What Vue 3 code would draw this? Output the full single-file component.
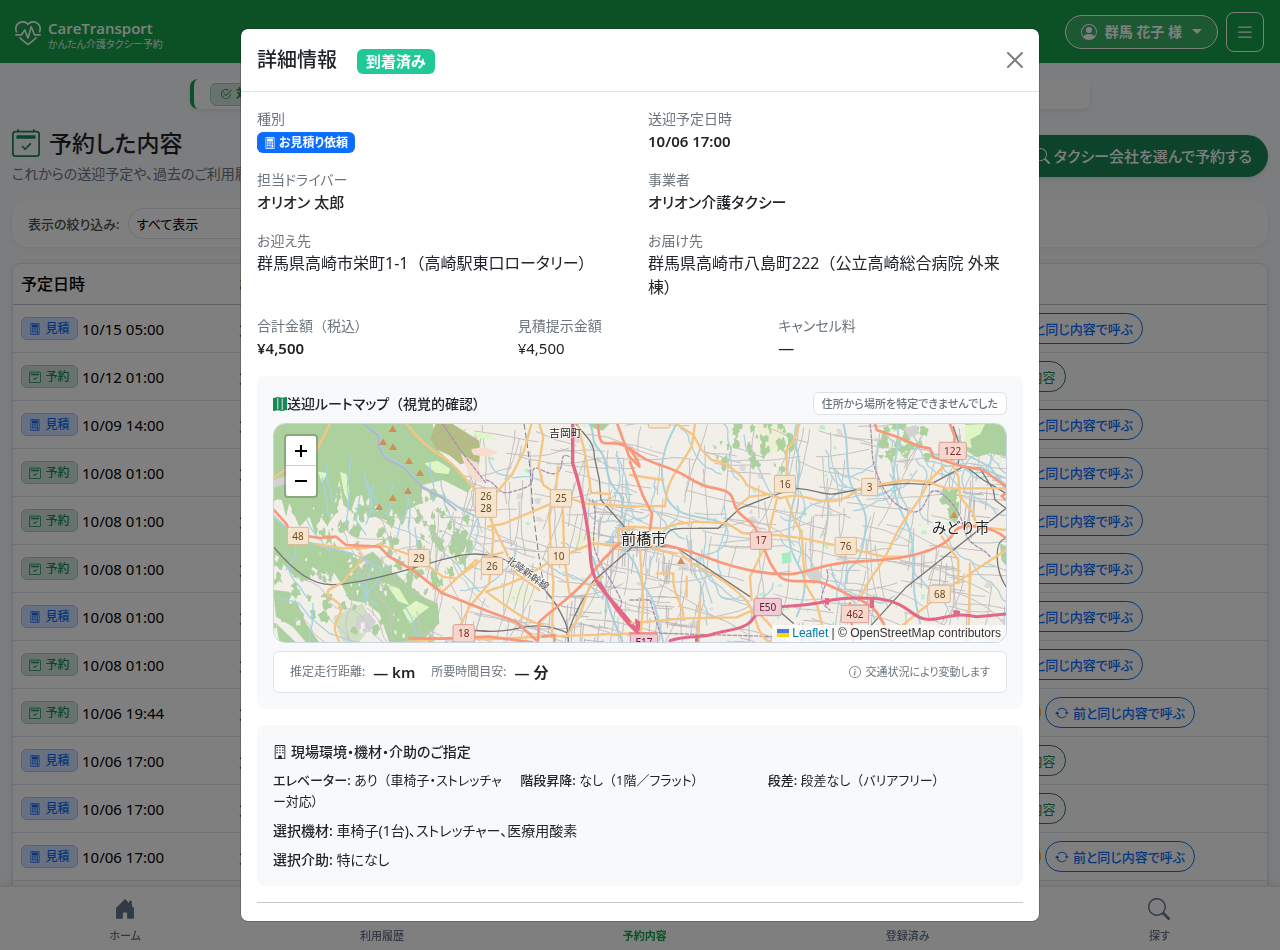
<script setup>
import { h } from 'vue'

const icons = {
  heartPulse: [
    'm8 2.748-.717-.737C5.6.281 2.514.878 1.4 3.053.918 3.995.78 5.323 1.508 7H.43c-2.128-5.697 4.165-8.83 7.394-5.857q.09.083.176.171a3 3 0 0 1 .176-.17c3.23-2.974 9.522.159 7.394 5.856h-1.078c.728-1.677.59-3.005.108-3.947C13.486.878 10.4.28 8.717 2.01zM2.212 10h1.315C4.593 11.183 6.05 12.458 8 13.795c1.949-1.337 3.407-2.612 4.473-3.795h1.315c-1.265 1.566-3.14 3.25-5.788 5-2.648-1.75-4.523-3.434-5.788-5',
    'M10.464 3.314a.5.5 0 0 0-.945.049L7.921 8.956 6.464 5.314a.5.5 0 0 0-.88-.091L3.732 8H.5a.5.5 0 0 0 0 1H4a.5.5 0 0 0 .416-.223l1.473-2.209 1.647 4.118a.5.5 0 0 0 .945-.049l1.598-5.593 1.457 3.642A.5.5 0 0 0 12 9h3.5a.5.5 0 0 0 0-1h-3.162z'
  ],
  calendar: [
    'M10.854 8.146a.5.5 0 0 1 0 .708l-3 3a.5.5 0 0 1-.708 0l-1.5-1.5a.5.5 0 0 1 .708-.708L7.5 10.793l2.646-2.647a.5.5 0 0 1 .708 0',
    'M3.5 0a.5.5 0 0 1 .5.5V1h8V.5a.5.5 0 0 1 1 0V1h1a2 2 0 0 1 2 2v11a2 2 0 0 1-2 2H2a2 2 0 0 1-2-2V3a2 2 0 0 1 2-2h1V.5a.5.5 0 0 1 .5-.5M2 2a1 1 0 0 0-1 1v11a1 1 0 0 0 1 1h12a1 1 0 0 0 1-1V3a1 1 0 0 0-1-1z',
    'M2.5 4a.5.5 0 0 1 .5-.5h10a.5.5 0 0 1 .5.5v1a.5.5 0 0 1-.5.5H3a.5.5 0 0 1-.5-.5z'
  ],
  search: [
    'M11.742 10.344a6.5 6.5 0 1 0-1.397 1.398h-.001q.044.06.098.115l3.85 3.85a1 1 0 0 0 1.415-1.414l-3.85-3.85a1 1 0 0 0-.115-.1zM12 6.5a5.5 5.5 0 1 1-11 0 5.5 5.5 0 0 1 11 0'
  ],
  person: [
    'M11 6a3 3 0 1 1-6 0 3 3 0 0 1 6 0',
    'M0 8a8 8 0 1 1 16 0A8 8 0 0 1 0 8m8-7a7 7 0 0 0-5.468 11.37C3.242 11.226 4.805 10 8 10s4.757 1.225 5.468 2.37A7 7 0 0 0 8 1'
  ],
  list: [
    'M2.5 12a.5.5 0 0 1 .5-.5h10a.5.5 0 0 1 0 1H3a.5.5 0 0 1-.5-.5m0-4a.5.5 0 0 1 .5-.5h10a.5.5 0 0 1 0 1H3a.5.5 0 0 1-.5-.5m0-4a.5.5 0 0 1 .5-.5h10a.5.5 0 0 1 0 1H3a.5.5 0 0 1-.5-.5'
  ],
  house: [
    'M6.5 14.5v-3.505c0-.245.25-.495.5-.495h2c.25 0 .5.25.5.5v3.5a.5.5 0 0 0 .5.5h4a.5.5 0 0 0 .5-.5v-7a.5.5 0 0 0-.146-.354L13 5.793V2.5a.5.5 0 0 0-.5-.5h-1a.5.5 0 0 0-.5.5v1.293L8.354 1.146a.5.5 0 0 0-.708 0l-6 6A.5.5 0 0 0 1.5 7.5v7a.5.5 0 0 0 .5.5h4a.5.5 0 0 0 .5-.5'
  ],
  check: [
    'M2.5 8a5.5 5.5 0 0 1 8.25-4.764.5.5 0 0 0 .5-.866A6.5 6.5 0 1 0 14.5 8a.5.5 0 0 0-1 0 5.5 5.5 0 1 1-11 0',
    'M15.354 3.354a.5.5 0 0 0-.708-.708L8 9.293 5.354 6.646a.5.5 0 1 0-.708.708l3 3a.5.5 0 0 0 .708 0z'
  ],
  info: [
    'M8 15A7 7 0 1 1 8 1a7 7 0 0 1 0 14m0 1A8 8 0 1 0 8 0a8 8 0 0 0 0 16',
    'm8.93 6.588-2.29.287-.082.38.45.083c.294.07.352.176.288.469l-.738 3.468c-.194.897.105 1.319.808 1.319.545 0 1.178-.252 1.465-.598l.088-.416c-.2.176-.492.246-.686.246-.275 0-.375-.193-.304-.533zM9 4.5a1 1 0 1 1-2 0 1 1 0 0 1 2 0'
  ],
  repeat: [
    'M11.534 7h3.932a.25.25 0 0 1 .192.41l-1.966 2.36a.25.25 0 0 1-.384 0l-1.966-2.36a.25.25 0 0 1 .192-.41m-11 2h3.932a.25.25 0 0 0 .192-.41L2.692 6.23a.25.25 0 0 0-.384 0L.342 8.59A.25.25 0 0 0 .534 9',
    'M8 3c-1.552 0-2.94.707-3.857 1.818a.5.5 0 1 1-.771-.636A6.002 6.002 0 0 1 13.917 7H12.9A5 5 0 0 0 8 3M3.1 9a5.002 5.002 0 0 0 8.757 2.182.5.5 0 1 1 .771.636A6.002 6.002 0 0 1 2.083 9z'
  ],
  calculator: [
    'M3 0h10a1 1 0 0 1 1 1v14a1 1 0 0 1-1 1H3a1 1 0 0 1-1-1V1a1 1 0 0 1 1-1m0 1v14h10V1z',
    'M4 2h8v4H4zM4 7h2v2H4zm3 0h2v2H7zm3 0h2v2h-2zM4 10h2v2H4zm3 0h2v2H7zm-3 3h2v1H4zm3 0h2v1H7zm3-3h2v4h-2z'
  ],
  map: [
    'M15.8.1a.5.5 0 0 1 .2.4v14a.5.5 0 0 1-.4.49l-5 1h-.2L5.500 15.010l-4.900.98A.5.5 0 0 1 0 15.500v-14a.5.5 0 0 1 .4-.49l5-1h.2l4.900.98 4.900-.98a.5.5 0 0 1 .4.09M5 14.090V1.110l.5-.1.5.1v12.980l-.5-.1zm5 .8V1.910l.5.1.5-.1v12.980l-.5.1z'
  ],
  building: [
    'M2 1a1 1 0 0 1 1-1h10a1 1 0 0 1 1 1v14a1 1 0 0 1-1 1H3a1 1 0 0 1-1-1zm11 0H3v14h3v-2.500a.5.5 0 0 1 .5-.5h3a.5.5 0 0 1 .5.5V15h3z',
    'M4 2h1.500v1.500H4zm3.200 0h1.500v1.500H7.200zm3.300 0H12v1.500h-1.500zM4 5h1.500v1.500H4zm3.200 0h1.500v1.500H7.200zm3.300 0H12v1.500h-1.500zM4 8h1.500v1.500H4zm3.200 0h1.500v1.500H7.200zm3.300 0H12v1.500h-1.500z'
  ],
  close: [
    'M.293.293a1 1 0 0 1 1.414 0L8 6.586 14.293.293a1 1 0 1 1 1.414 1.414L9.414 8l6.293 6.293a1 1 0 0 1-1.414 1.414L8 9.414l-6.293 6.293a1 1 0 0 1-1.414-1.414L6.586 8 .293 1.707a1 1 0 0 1 0-1.414'
  ]
}

const Icon = (props) =>
  h(
    'svg',
    { width: props.size, height: props.size, viewBox: '0 0 16 16', fill: 'currentColor', 'aria-hidden': 'true' },
    icons[props.name].map((d) => h('path', { d, 'fill-rule': 'evenodd' }))
  )
Icon.props = ['name', 'size']

const rows = [
  ['quote', '10/15 05:00', 'repeat'],
  ['book', '10/12 01:00', 'detail'],
  ['quote', '10/09 14:00', 'repeat'],
  ['book', '10/08 01:00', 'repeat'],
  ['book', '10/08 01:00', 'repeat'],
  ['book', '10/08 01:00', 'repeat'],
  ['quote', '10/08 01:00', 'repeat'],
  ['book', '10/08 01:00', 'repeat'],
  ['book', '10/06 19:44', 'both'],
  ['quote', '10/06 17:00', 'detail'],
  ['quote', '10/06 17:00', 'detail'],
  ['quote', '10/06 17:00', 'both'],
  ['book', '10/05 09:00', 'repeat']
]

const tabs = [
  { label: 'ホーム', icon: 'house' },
  { label: '利用履歴', icon: 'list' },
  { label: '予約内容', icon: 'calendar', active: true },
  { label: '登録済み', icon: 'check' },
  { label: '探す', icon: 'search' }
]

// Map terrain: a seeded generator keeps the small streets and streams stable.
let seed = 41
const rnd = () => {
  seed = (seed * 16807) % 2147483647
  return seed / 2147483647
}
const W = 2196
const H = 654
function wander(x, y, angle, steps, len, wobble) {
  let d = `M${Math.round(x)} ${Math.round(y)}`
  for (let i = 0; i < steps; i++) {
    angle += (rnd() - 0.5) * wobble
    x += Math.cos(angle) * len
    y += Math.sin(angle) * len
    d += `L${Math.round(x)} ${Math.round(y)}`
  }
  return d
}
const eastX = (from) => from + rnd() * (W - from)
const streets = Array.from({ length: 330 }, () =>
  wander(eastX(480), rnd() * H, (rnd() > 0.5 ? 0.15 : 1.7) + (rnd() - 0.5) * 0.3, 3 + Math.floor(rnd() * 5), 32, 0.35)
).join('')
const townStreets = [[1150, 560], [1030, 350], [1000, 250], [1130, 380], [870, 560], [1560, 620], [930, 640], [1960, 430], [2120, 240]]
  .map(([cx, cy]) =>
    Array.from({ length: 14 }, () => wander(cx + (rnd() - 0.5) * 120, cy + (rnd() - 0.5) * 90, rnd() > 0.5 ? 0.1 : 1.65, 2, 28, 0.1)).join('')
  )
  .join('')
const hillStreets = Array.from({ length: 32 }, () =>
  wander(rnd() * 560, 220 + rnd() * 420, 0.3 + rnd() * 1.3, 7, 26, 0.9)
).join('')
const streams = Array.from({ length: 48 }, () =>
  wander(eastX(500), rnd() * 520 - 40, 1.2 + rnd() * 0.5, 14, 16, 1.1)
).join('')
const hillStreams = Array.from({ length: 18 }, () =>
  wander(rnd() * 520, 100 + rnd() * 500, 1 + rnd() * 0.8, 6, 20, 0.6)
).join('')
function blob(x, y, r, stretch) {
  let d = ''
  const n = 11
  for (let i = 0; i < n; i++) {
    const a = (i / n) * Math.PI * 2
    const k = r * (0.35 + rnd() * 0.85)
    d += `${i ? 'L' : 'M'}${Math.round(x + Math.cos(a) * k)} ${Math.round(y + Math.sin(a) * k * stretch)}`
  }
  return d + 'Z'
}
const groves = [
  ...Array.from({ length: 150 }, () => blob(rnd() * 590, 180 + rnd() * 300, 4 + rnd() * 13, 1.6)),
  ...Array.from({ length: 55 }, () => blob(rnd() * 480, 400 + rnd() * 250, 6 + rnd() * 15, 1.1)),
  ...Array.from({ length: 34 }, () => blob(1320 + rnd() * 260, rnd() * 140, 4 + rnd() * 12, 1.7)),
  ...Array.from({ length: 30 }, () => blob(1820 + rnd() * 140, rnd() * 110, 5 + rnd() * 13, 1.2)),
  ...Array.from({ length: 8 }, () => blob(2010 + rnd() * 50, 200 + rnd() * 90, 8 + rnd() * 12, 1.5))
].join('')
const clearings = Array.from({ length: 80 }, () => blob(rnd() * 560, 230 + rnd() * 410, 2 + rnd() * 7, 1.6)).join('')
const parks = Array.from({ length: 85 }, () => blob(eastX(650), rnd() * H, 3 + rnd() * 7, 1)).join('')
const works = Array.from({ length: 34 }, () => blob(eastX(700), rnd() * H, 6 + rnd() * 13, 0.8)).join('')

const shields = [
  { x: 636, y: 236, t: ['26', '28'] },
  { x: 861, y: 223, t: ['25'] },
  { x: 72, y: 336, t: ['48'] },
  { x: 435, y: 402, t: ['29'] },
  { x: 654, y: 426, t: ['26'] },
  { x: 854, y: 396, t: ['10'] },
  { x: 1533, y: 180, t: ['16'] },
  { x: 1787, y: 189, t: ['3'], w: 48 },
  { x: 1715, y: 366, t: ['76'] },
  { x: 1997, y: 510, t: ['68'] },
  { x: 1155, y: -14, t: [] },
  { x: 569, y: 628, t: ['18'], k: 'trunk' },
  { x: 2036, y: 81, t: ['122'], k: 'trunk', w: 82 },
  { x: 1461, y: 350, t: ['17'], k: 'trunk' },
  { x: 1743, y: 570, t: ['462'], k: 'trunk', w: 82 },
  { x: 1481, y: 549, t: ['E50'], k: 'motor', w: 82 },
  { x: 1110, y: 656, t: ['E17'], k: 'motor', w: 82 }
]
const peaks = [[356, 14], [327, 53], [357, 68], [405, 110], [438, 146], [402, 200], [356, 221], [315, 248], [1221, 410], [2040, 272]]
</script>

<template>
  <div class="page">
    <header class="topbar">
      <a class="brand" href="#">
        <Icon name="heartPulse" :size="26" />
        <span class="brand-text">
          <strong>CareTransport</strong>
          <small>かんたん介護タクシー予約</small>
        </span>
      </a>
      <div class="top-actions">
        <button class="user" type="button">
          <Icon name="person" :size="16" />
          <span>群馬 花子 様</span>
          <i class="caret"></i>
        </button>
        <button class="menu" type="button" aria-label="メニュー"><Icon name="list" :size="20" /></button>
      </div>
    </header>

    <main class="content">
      <div class="notice"><span class="notice-tag"><Icon name="check" :size="12" />対応エリア</span></div>
      <div class="heading">
        <div>
          <h1><Icon name="calendar" :size="28" />予約した内容</h1>
          <p>これからの送迎予定や、過去のご利用履歴を確認できます</p>
        </div>
        <button class="cta" type="button"><Icon name="search" :size="16" />タクシー会社を選んで予約する</button>
      </div>
      <div class="filter">
        <label for="filter">表示の絞り込み:</label>
        <select id="filter"><option>すべて表示</option></select>
      </div>
      <table class="list">
        <thead>
          <tr><th class="c-date">予定日時</th><th>お迎え先</th><th class="c-act">ご操作</th></tr>
        </thead>
        <tbody>
          <tr v-for="(r, i) in rows" :key="i">
            <td>
              <div class="slot">
                <span class="tag" :class="r[0]">
                  <Icon :name="r[0] === 'quote' ? 'calculator' : 'calendar'" :size="12" />{{ r[0] === 'quote' ? '見積' : '予約' }}
                </span>
                <span class="date">{{ r[1] }}</span>
              </div>
            </td>
            <td>太田市</td>
            <td>
              <div class="acts">
                <button v-if="r[2] === 'both'" class="pill warn" type="button">評価</button>
                <button v-if="r[2] === 'detail'" class="pill ok" type="button">予約内容</button>
                <button v-else class="pill again" type="button"><Icon name="repeat" :size="14" />前と同じ内容で呼ぶ</button>
              </div>
            </td>
          </tr>
        </tbody>
      </table>
    </main>

    <nav class="tabs">
      <a v-for="t in tabs" :key="t.label" href="#" :class="{ active: t.active }">
        <Icon :name="t.icon" :size="22" /><span>{{ t.label }}</span>
      </a>
    </nav>

    <div class="backdrop">
      <section class="modal" role="dialog" aria-modal="true" aria-labelledby="modal-title">
        <header class="modal-head">
          <h2 id="modal-title">詳細情報</h2>
          <span class="status">到着済み</span>
          <button class="close" type="button" aria-label="閉じる"><Icon name="close" :size="16" /></button>
        </header>
        <div class="modal-body">
          <dl class="grid two">
            <div><dt>種別</dt><dd><span class="kind"><Icon name="calculator" :size="12" />お見積り依頼</span></dd></div>
            <div><dt>送迎予定日時</dt><dd class="when">10/06 17:00</dd></div>
            <div><dt>担当ドライバー</dt><dd class="strong">オリオン 太郎</dd></div>
            <div><dt>事業者</dt><dd class="strong">オリオン介護タクシー</dd></div>
            <div><dt>お迎え先</dt><dd>群馬県高崎市栄町1-1<i class="open">（</i>高崎駅東口ロータリー）</dd></div>
            <div><dt>お届け先</dt><dd>群馬県高崎市八島町222<i class="open">（</i>公立高崎総合病院 外来棟）</dd></div>
          </dl>
          <dl class="grid three">
            <div><dt>合計金額<i class="open">（</i>税込）</dt><dd class="when">¥4,500</dd></div>
            <div><dt>見積提示金額</dt><dd class="amount">¥4,500</dd></div>
            <div><dt>キャンセル料</dt><dd>—</dd></div>
          </dl>

          <section class="card">
            <div class="map-head">
              <h3><Icon name="map" :size="14" /><span>送迎ルートマップ<i class="open">（</i>視覚的確認）</span></h3>
              <span class="map-note">住所から場所を特定できませんでした</span>
            </div>
            <div class="map">
              <svg class="map-svg" viewBox="0 0 2196 654" preserveAspectRatio="xMidYMid slice" role="img" aria-label="地図">
                <rect width="2196" height="654" fill="#f2efe9" />
                <g class="line">
                  <path :d="works" fill="#dcd9d6" />
                  <path d="M1450 0l90 0-20 80-60 20zM900 330l60-10 20 50-70 10zM690 500l70-20 10 50-80 10z" fill="#eef0d5" />
                  <path :d="parks" fill="#b9f0d0" />
                  <path :d="streets" stroke="#c3c1c2" stroke-width="3" />
                  <path :d="townStreets" stroke="#bbb9bc" stroke-width="3" />
                  <path :d="streams" stroke="#aad3df" stroke-width="4" />
                  <path :d="groves" fill="#add19e" />
                </g>
                <!-- western hills and Maebashi -->
                <g class="line" transform="translate(-54 -162)">
                  <g fill="#add19e">
                    <path d="M52 162H530L545 240 600 290 650 345 636 368 560 330 500 345 494 400 455 420 440 470 420 430 395 452 360 440 335 445 318 375 300 380 285 425 262 405 250 330 235 405 215 470 195 440 180 500 160 440 130 470 100 400 90 440 75 380 52 395Z" />
                    <path d="M52 440L90 470 120 505 200 525 260 540 295 552 270 580 235 610 200 612 170 590 150 630 110 615 80 580 52 590Z" />
                    <path d="M225 595L300 570 350 545 400 590 450 640 500 680 545 700 550 760 510 800 490 817 400 817 370 730 330 700 280 690 255 640Z" />
                    <path d="M52 660L100 665 125 700 150 760 190 817H150L110 770 60 740ZM60 760l60 57H70Z" />
                    <path d="M230 740l90-40 30 60-40 57H260Z" opacity=".5" />
                    <path d="M1000 162h60l-20 20-30-8z" />
                  </g>
                  <path d="M538 162H590L670 212V275L612 282 580 256 540 238 524 205Z" fill="#b3bd86" />
                  <path d="M524 205l60-43M540 238l90-60M575 252l90-50M612 282l58-35" stroke="#d9a08e" stroke-width="2" />
                  <path d="M645 238l40-8 42 16-30 16-45-8zM614 250l52 32 16 60-30-12-24-40z" fill="#f6ddd0" />
                  <path d="M505 280l40-8 38 24-6 16-38-4zM186 305l28 4-16 30zM252 305l20 8 8 50-2 35-14-30zM390 640l40 16 30 50-34-12zM440 720l40-28 40 20-28 20-30 30zM645 184l50 6 30 20-50-4z" fill="#dff6c4" />
                  <path d="M300 740l40-10 20 25-20 32-40-8zM52 330l40-14v25l-40 12z" fill="#d3d2d3" />
                  <path :d="clearings" fill="#f2efe9" transform="translate(54 162)" />
                  <path :d="hillStreets" stroke="#c6c4c6" stroke-width="3" transform="translate(54 162)" />
                  <path :d="hillStreams" stroke="#a5d2e4" stroke-width="4" transform="translate(54 162)" />
                  <path d="M52 435L130 510 200 530 290 550 360 590 400 600M60 680L130 700 160 740 220 790 300 817M284 265C286 320 268 330 276 365S272 430 270 465M410 345L402 420M312 375L300 450 330 495" stroke="#a5d2e4" stroke-width="4" />
                  <path d="M325 162L375 200 372 222 388 260 440 285 500 350 560 380 620 420 660 440M1010 560C1030 620 1050 680 1062 720S1090 790 1100 817M1000 162C1020 190 1000 210 1030 240S1045 330 1080 360 1090 420 1100 440" stroke="#a5cfdc" stroke-width="6" />
                  <path d="M325 164L368 198 368 228 386 264 440 290 500 354 560 385 600 420" stroke="#b5b4c0" stroke-width="5" />
                  <path d="M52 530C120 610 170 645 230 644S420 610 520 580 660 545 720 560 870 650 905 712 935 780 937 817M937 790C870 760 830 765 770 778S660 780 640 780M937 790C950 730 985 690 1010 635L1130 530" stroke="#777" stroke-width="4" />
                  <path d="M804 162C812 210 820 260 825 340S840 510 862 640" stroke="#777" stroke-width="3" stroke-dasharray="16 12" />
                  <path d="M960 162C990 200 1015 215 1015 260L1030 330 1035 390 1105 470" stroke="#777" stroke-width="4" />
                  <path d="M690 330C730 340 720 380 770 365S830 350 830 310 870 320 900 310 905 240 940 260M1010 390C1030 450 1000 500 1020 550S1060 620 1080 660 1100 690 1090 720M560 162L620 250 660 300 690 340" stroke="#a892b4" stroke-width="4" stroke-dasharray="10 6" />
                  <g class="road" stroke="#f7c583" stroke-width="7">
                    <path d="M452 162C480 200 510 230 560 260S640 350 670 370M222 162L185 235M52 325L100 290M826 162L805 240 770 310 720 370M850 162L862 200 848 290 862 345 900 370 985 400 1140 410M906 290L900 360 880 440 885 560 892 640 888 800M920 410L925 560 940 670M700 440L750 545 780 610 850 660M695 470L740 462 900 395M706 440L712 500 700 640 640 710 590 817M520 590L560 620 600 626 690 560 740 548M690 665C740 700 800 750 860 765M690 665C740 650 800 630 880 575L1010 520 1090 525M555 670L660 570M440 817L560 805 700 808 860 800 1140 790M937 790L970 740 1000 650 1040 620M965 162L985 240 1000 330 1005 368 1060 372 1065 410M375 525L420 540 520 575M375 520C330 545 300 530 260 535L180 522M310 548C330 580 280 600 270 625S210 650 215 670 250 690 255 712 225 760 240 790L250 817M1140 470L1085 480 1090 540" />
                  </g>
                  <g class="road" stroke="#f9987a" stroke-width="8">
                    <path d="M52 418L90 460 105 490 190 504 240 500 270 525 370 530 400 560 470 600 560 670 700 725 780 755 840 810M1026 162C1030 240 1045 215 1080 220S1130 240 1150 285M1084 162L1120 260 1150 290M1090 520L1040 570 1000 620C940 690 910 700 850 755L845 817M460 805L560 806 700 800 830 817M860 800L895 795 895 817" />
                  </g>
                  <path d="M950 162V280C980 370 990 440 998 500S1000 590 1020 630 1090 710 1140 780" stroke="#e36886" stroke-width="10" />
                </g>
                <!-- eastern plain up to Midori -->
                <g class="line" transform="translate(1068 -162)">
                  <path d="M1005 162H1115L1128 190V260L1080 250 1040 262 1005 240 1012 200ZM1110 520l20 10v60l-16-20z" fill="#add19e" />
                  <path d="M1005 165l60-3-14 30-30 16 4 26-20-4z" fill="#dff6c4" />
                  <path d="M820 175l40-10 8 26-30 12zM520 600l40-10 20 30-30 24z" fill="#d3d2d3" />
                  <path d="M455 550l26-4 4 30-28 6z" fill="#a6edc4" />
                  <path d="M-20 540C30 580 20 620 50 660S80 740 100 817M500 162C480 230 520 250 505 330S470 440 480 520 560 600 500 740M1000 250L1080 290 1128 360M1050 290L1110 320M640 162C660 220 640 300 670 360S720 420 700 520 650 560 650 640M140 162C100 230 80 300 110 380S250 430 290 470M800 162C820 230 770 300 800 390S850 460 850 580 860 700 870 760" stroke="#a9d3de" stroke-width="6" />
                  <path d="M720 162C730 230 720 260 740 310S780 400 830 420 880 400 900 370 990 410 1000 470 1060 530 1080 560M590 600C610 640 540 680 600 720M0 690L60 690 90 790 450 800" stroke="#a892b4" stroke-width="4" stroke-dasharray="10 6" />
                  <path d="M0 530C60 540 120 515 150 540L360 680M105 505C110 480 130 475 160 475H265L330 415C380 395 440 370 500 355 560 360 580 375 610 372S730 345 830 340L900 344 1000 290 1050 295 1090 360 1095 390 1128 415M1010 292L1060 330 1128 370M720 770L830 650 1128 415M455 730L490 760M970 170L990 230 985 280M1128 505C1090 510 1095 600 1128 650" stroke="#777" stroke-width="4" />
                  <g class="road" stroke="#f7c583" stroke-width="7">
                    <path d="M140 162L190 195 215 240 245 270C300 280 340 320 350 345L405 370 450 385C490 370 520 380 560 390S640 395 690 355M195 162L185 230C150 290 120 320 110 370L105 410M508 162L490 215 470 240V320M405 375L360 380 320 410M440 390L420 470 415 500M470 385L490 440 515 490 525 640 560 700 580 780M0 410L100 408M0 315L100 330M-10 470L100 475 140 462 200 455 290 460 340 490 410 495 440 495 520 505 610 525M680 540L760 560 830 560M740 345L830 330 890 335 950 355 1128 355M890 345C870 400 830 430 800 490S770 560 740 600 700 660 690 690M940 290L890 340M970 290L985 320 990 380 1030 430 1040 470 1128 480M935 500L985 570V640M1128 540L960 650 800 780M1020 580L1015 817M150 545C180 590 240 600 290 640S360 690 380 760 440 817 450 817M80 610H130V640C140 700 160 700 160 740M170 620V680M30 540L40 700 30 817M0 760L160 745 320 742 370 720M210 690L205 817M400 540L360 620 365 690M395 740C420 760 440 790 450 817M380 680L400 720M10 500L100 545 140 550" />
                  </g>
                  <g class="road" stroke="#f9987a" stroke-width="8">
                    <path d="M0 275L40 380 66 430 60 480M0 235C60 290 110 280 170 320S260 350 290 365 300 410 340 440 380 480 400 530 430 600 450 620 520 630 560 635 640 670 690 690 750 740 790 817M105 525C180 540 220 560 280 580S440 620 500 610 580 580 680 575 830 560 850 555 950 530 970 490 1090 470 1128 505M735 162L740 180 800 200 870 230 900 235 910 262 1000 290 1060 300 1128 350M960 162L975 200 965 270M1128 370L1115 378 1128 390M660 700L670 817M0 790L80 790" />
                  </g>
                  <path d="M120 812C170 795 210 805 250 792S350 780 370 745 450 710 520 705 600 680 720 685 840 745 890 748 960 725 1040 740L1128 732M-90 640C-60 690-30 740 25 790" stroke="#e36886" stroke-width="9" />
                  <path d="M585 684h12v20h-12zM720 684h12v30h-12zM970 720l20 2v16h-20zM15 745l16 10-2 30-12-8zM195 795h10v20h-10z" fill="#e36886" />
                </g>
                <path v-for="(p, i) in peaks" :key="i" :d="`M${p[0]} ${p[1] - 10}l12 20h-24z`" fill="#d08f55" />
                <g v-for="(s, i) in shields" :key="'s' + i" :class="['shield', s.k]" :transform="`translate(${s.x} ${s.y})`">
                  <rect :x="-(s.w || 64) / 2" :y="s.t.length > 1 ? -44 : -26" :width="s.w || 64" :height="s.t.length > 1 ? 88 : 52" rx="5" />
                  <text v-for="(t, j) in s.t" :key="j" y="11" :dy="s.t.length > 1 ? j * 36 - 18 : 0">{{ t }}</text>
                </g>
                <g class="place">
                  <text x="874" y="40" font-size="32">吉岡町</text>
                  <text x="1109" y="360" font-size="45">前橋市</text>
                  <text x="2060" y="327" font-size="43">みどり市</text>
                  <text transform="translate(694 412) rotate(36)" font-size="30">北陸新幹線</text>
                </g>
              </svg>
              <div class="zoom">
                <button type="button" aria-label="拡大"><svg width="12" height="12" viewBox="0 0 12 12"><path d="M0 6h12M6 0v12" /></svg></button>
                <button type="button" aria-label="縮小"><svg width="12" height="12" viewBox="0 0 12 12"><path d="M0 6h12" /></svg></button>
              </div>
              <div class="credit">
                <svg width="12" height="8" viewBox="0 0 12 8" aria-hidden="true"><path fill="#4c7be1" d="M0 0h12v4H0z" /><path fill="#ffd500" d="M0 4h12v4H0z" /></svg>
                <a href="#">Leaflet</a> | © OpenStreetMap contributors
              </div>
            </div>
            <div class="trip">
              <span>推定走行距離:</span><b>— km</b>
              <span class="second">所要時間目安:</span><b>— 分</b>
              <span class="trip-note"><Icon name="info" :size="12" />交通状況により変動します</span>
            </div>
          </section>

          <section class="card spec">
            <h3><Icon name="building" :size="14" />現場環境・機材・介助のご指定</h3>
            <div class="spec-row">
              <div><b>エレベーター:</b> あり<i class="open">（</i>車椅子・ストレッチャー対応）</div>
              <div><b>階段昇降:</b> なし<i class="open">（</i>1階／フラット）</div>
              <div><b>段差:</b> 段差なし<i class="open">（</i>バリアフリー）</div>
            </div>
            <div><b>選択機材:</b> 車椅子(1台)、ストレッチャー、医療用酸素</div>
            <div><b>選択介助:</b> 特になし</div>
          </section>
          <hr />
        </div>
      </section>
    </div>
  </div>
</template>

<style>
body {
  background: #f8fafc;
}
</style>

<style scoped>
.page,
.page * {
  box-sizing: border-box;
}
.page {
  height: 100vh;
  overflow: hidden;
  background: #f8fafc;
  color: #212529;
  font-family: "Noto Sans", "Noto Sans CJK JP", sans-serif;
  font-size: 16px;
  line-height: 24px;
  font-feature-settings: "palt";
}
.page button,
.page select {
  font: inherit;
  font-feature-settings: "palt";
}
.open {
  font-style: normal;
  font-feature-settings: normal;
}
svg {
  flex: none;
  display: block;
}
h1, h2, h3, p, dl, dd {
  margin: 0;
}

.topbar {
  display: flex;
  align-items: center;
  justify-content: space-between;
  height: 63px;
  padding: 0 16px 0 15px;
  background: #16a34a;
  color: #fff;
}
.brand {
  display: flex;
  align-items: center;
  gap: 7px;
  padding-top: 4px;
  color: #fff;
  text-decoration: none;
}
.brand-text {
  display: flex;
  flex-direction: column;
  padding-top: 2px;
}
.brand strong {
  font-family: "Open Sans", "Noto Sans", sans-serif;
  font-size: 15px;
  font-weight: 600;
  line-height: 18px;
}
.brand small {
  font-size: 10px;
  line-height: 14px;
  opacity: .9;
}
.top-actions {
  display: flex;
  align-items: center;
  gap: 8px;
}
.user {
  display: flex;
  align-items: center;
  gap: 8px;
  height: 34px;
  padding: 0 15px;
  border: 1px solid #fff;
  border-radius: 17px;
  background: rgba(255, 255, 255, .15);
  color: #fff;
}
.page .user {
  font-size: 14px;
  font-weight: 700;
}
.caret {
  margin-left: 2px;
  border: 5px solid transparent;
  border-top-color: #fff;
  border-bottom: 0;
}
.menu {
  display: flex;
  align-items: center;
  justify-content: center;
  width: 38px;
  height: 40px;
  padding: 0;
  border: 1px solid #fff;
  border-radius: 8px;
  background: none;
  color: #fff;
}

.content {
  padding: 16px 12px 0;
}
.notice {
  display: flex;
  align-items: center;
  max-width: 900px;
  height: 30px;
  margin: 0 auto;
  padding: 0 16px;
  border-left: 4px solid #16a34a;
  border-radius: 8px;
  background: #fff;
  box-shadow: 0 2px 4px rgba(0, 0, 0, .08);
}
.notice-tag {
  display: inline-flex;
  align-items: center;
  gap: 4px;
  height: 23px;
  padding: 0 9px;
  border: 1px solid #a3cfbb;
  border-radius: 6px;
  background: #d1e7dd;
  color: #198754;
  font-size: 12px;
  font-weight: 700;
}
.heading {
  display: flex;
  align-items: center;
  justify-content: space-between;
  margin-top: 19px;
}
h1 {
  display: flex;
  align-items: center;
  gap: 9px;
  font-size: 23px;
  font-weight: 500;
  line-height: 30px;
}
h1 svg {
  color: #198754;
}
.heading p {
  margin-top: 6px;
  color: #6c757d;
  font-size: 14px;
  line-height: 20px;
}
.cta {
  display: flex;
  align-items: center;
  gap: 4px;
  height: 42px;
  padding: 0 16px;
  border: 0;
  border-radius: 21px;
  background: #198754;
  color: #fff;
  box-shadow: 0 2px 4px rgba(0, 0, 0, .1);
}
.page .cta {
  font-size: 15px;
  font-weight: 500;
}
.filter {
  display: flex;
  align-items: center;
  gap: 8px;
  height: 47px;
  margin-top: 16px;
  padding: 0 16px;
  border-radius: 16px;
  background: #fff;
  box-shadow: 0 2px 4px rgba(0, 0, 0, .06);
}
.filter label {
  color: #495057;
  font-size: 13px;
  font-weight: 500;
}
.filter select {
  width: 220px;
  height: 31px;
  padding: 0 8px;
  border: 1px solid #dee2e6;
  border-radius: 16px;
  background: #fff;
  appearance: none;
}
.page .filter select {
  font-size: 13px;
}
.list {
  width: 100%;
  margin-top: 16px;
  table-layout: fixed;
  border-collapse: separate;
  border-spacing: 0;
  border: 1px solid #dee2e6;
  border-radius: 8px;
  background: #fff;
  box-shadow: 0 2px 6px rgba(0, 0, 0, .1);
}
.list th,
.list td {
  padding: 0 8px;
  border-bottom: 1px solid #dee2e6;
  text-align: left;
  color: #000;
}
.list th {
  height: 41px;
  border-bottom-color: #bfc3c7;
  font-weight: 500;
}
.list td {
  height: 48px;
  white-space: nowrap;
}
.c-date {
  width: 218px;
}
.c-act {
  width: 282px;
}
.slot {
  display: flex;
  align-items: center;
  gap: 4px;
}
.tag {
  display: flex;
  align-items: center;
  justify-content: center;
  gap: 4px;
  width: 57px;
  height: 23px;
  border: 1px solid;
  border-radius: 6px;
  font-size: 12px;
  font-weight: 500;
}
.tag.quote {
  border-color: #9ec5fe;
  background: #cfe2ff;
  color: #0d6efd;
}
.tag.book {
  border-color: #a3cfbb;
  background: #d1e7dd;
  color: #198754;
}
.date {
  font-size: 15px;
}
.acts {
  display: flex;
  gap: 4px;
}
.pill {
  display: flex;
  align-items: center;
  justify-content: center;
  gap: 4px;
  height: 31px;
  padding: 0 8px;
  border: 1px solid;
  border-radius: 16px;
  background: none;
}
.page .pill {
  font-size: 13px;
}
.page .again {
  min-width: 150px;
  color: #0d6efd;
  font-weight: 500;
}
.ok {
  min-width: 73px;
  color: #198754;
}
.page .warn {
  width: 48px;
  border-color: #ffc107;
  background: #ffc107;
}

.tabs {
  position: fixed;
  right: 0;
  bottom: 0;
  left: 0;
  display: flex;
  justify-content: space-around;
  height: 64px;
  padding-top: 11px;
  border-top: 1px solid #e2e8f0;
  background: #fff;
  box-shadow: 0 -2px 8px rgba(0, 0, 0, .08);
}
.tabs a {
  display: flex;
  flex-direction: column;
  align-items: center;
  gap: 8px;
  color: #64748b;
  font-size: 11px;
  font-weight: 500;
  line-height: 16px;
  text-decoration: none;
}
.tabs a.active {
  color: #16a34a;
  font-weight: 700;
}

.backdrop {
  position: fixed;
  inset: 0;
  padding: 28px 16px;
  background: rgba(0, 0, 0, .5);
}
.modal {
  display: flex;
  flex-direction: column;
  max-width: 800px;
  height: 100%;
  margin: 0 auto;
  overflow: hidden;
  border: 1px solid rgba(0, 0, 0, .18);
  border-radius: 8px;
  background: #fff;
  background-clip: padding-box;
}
.modal-head {
  display: flex;
  align-items: baseline;
  flex: none;
  height: 63px;
  padding: 16px;
  border-bottom: 1px solid #dee2e6;
}
h2 {
  font-size: 20px;
  font-weight: 500;
  line-height: 30px;
}
.status {
  margin-left: 20px;
  padding: 0 9px;
  border-radius: 6px;
  background: #20c997;
  color: #fff;
  font-size: 15px;
  font-weight: 700;
  line-height: 25px;
}
.close {
  align-self: center;
  margin-left: auto;
  padding: 0;
  border: 0;
  background: none;
  color: #7f7f7f;
}
.modal-body {
  flex: 1;
  min-height: 0;
  padding: 16px 16px 0;
  overflow: hidden;
}
.grid {
  display: grid;
  gap: 16px;
  margin-bottom: 16px;
}
.two {
  grid-template-columns: repeat(2, 1fr);
}
.two dd {
  padding-right: 8px;
}
.three {
  grid-template-columns: repeat(3, 1fr);
}
dt {
  color: #6c757d;
  font-size: 14px;
  line-height: 21px;
}
.strong {
  font-size: 15px;
  font-weight: 500;
}
.when {
  font-size: 15px;
  font-weight: 600;
}
.amount {
  font-size: 15px;
}
.kind {
  display: inline-flex;
  align-items: center;
  gap: 3px;
  margin-top: 3px;
  padding: 0 7px;
  border-radius: 6px;
  background: #0d6efd;
  color: #fff;
  font-size: 12px;
  font-weight: 700;
  line-height: 21px;
  vertical-align: top;
}
.card {
  margin-bottom: 16px;
  padding: 16px;
  border-radius: 8px;
  background: #f8f9fa;
}
.map-head {
  display: flex;
  align-items: center;
  justify-content: space-between;
  margin-bottom: 8px;
}
h3 {
  display: flex;
  align-items: center;
  font-size: 14px;
  font-weight: 500;
  line-height: 21px;
}
.map-head h3 svg {
  color: #198754;
}
.map-note {
  padding: 0 8px;
  border: 1px solid #dee2e6;
  border-radius: 6px;
  background: #fff;
  color: #6c757d;
  font-size: 11px;
  font-weight: 500;
  line-height: 21px;
}
.map {
  position: relative;
  height: 220px;
  overflow: hidden;
  border: 1px solid #cbd5e1;
  border-radius: 12px;
}
.map-svg {
  width: 100%;
  height: 100%;
}
.line path {
  stroke-linejoin: round;
  stroke-linecap: round;
}
.line path:not([fill]) {
  fill: none;
}
.line g[fill] path {
  fill: #add19e;
}
.shield rect {
  fill: #f6e4cf;
  stroke: #d8b892;
  stroke-width: 3;
}
.shield text {
  fill: #6b4a1e;
  font-family: "Noto Sans", sans-serif;
  font-size: 30px;
  text-anchor: middle;
}
.shield.trunk rect {
  fill: #f7d6cd;
  stroke: #dba197;
}
.shield.trunk text {
  fill: #7a2e21;
}
.shield.motor rect {
  fill: #edccd4;
  stroke: #d18fa3;
}
.shield.motor text {
  fill: #6d1436;
}
.place text {
  fill: #222;
  stroke: rgba(255, 255, 255, .6);
  stroke-width: 6px;
  paint-order: stroke;
  text-anchor: middle;
  font-feature-settings: normal;
}
.place text[transform] {
  fill: #555;
  text-anchor: start;
}
.zoom {
  position: absolute;
  top: 10px;
  left: 10px;
  display: flex;
  flex-direction: column;
  border: 2px solid rgba(0, 0, 0, .2);
  border-radius: 4px;
  background: #fff;
  background-clip: padding-box;
}
.zoom button {
  display: flex;
  align-items: center;
  justify-content: center;
  width: 30px;
  height: 30px;
  padding: 0;
  border: 0;
  background: none;
}
.zoom button:first-child {
  border-bottom: 1px solid #ccc;
}
.zoom path {
  stroke: #000;
  stroke-width: 2;
}
.credit {
  position: absolute;
  right: 0;
  bottom: 0;
  padding: 0 5px;
  background: rgba(255, 255, 255, .8);
  color: #333;
  font-family: "Liberation Sans", Arial, sans-serif;
  font-size: 12px;
  line-height: 17px;
}
.credit svg {
  display: inline-block;
  margin-right: 3px;
}
.credit a {
  color: #0078a8;
  text-decoration: none;
}
.trip {
  display: flex;
  align-items: center;
  gap: 8px;
  margin-top: 8px;
  padding: 8px 16px;
  border: 1px solid #dee2e6;
  border-radius: 6px;
  background: #fff;
}
.trip span {
  color: #6c757d;
  font-size: 12px;
}
.trip b {
  font-size: 15px;
  font-weight: 600;
}
.trip .second {
  margin-left: 8px;
}
.trip .trip-note {
  display: flex;
  align-items: center;
  gap: 4px;
  margin-left: auto;
  font-size: 11px;
}
.spec {
  display: flex;
  flex-direction: column;
  gap: 8px;
  font-size: 14px;
  line-height: 21px;
}
.spec h3 {
  gap: 4px;
}
.spec b {
  font-weight: 500;
}
.spec-row {
  display: grid;
  grid-template-columns: repeat(3, 1fr);
  gap: 8px;
  font-size: 13px;
}
hr {
  margin: 0;
  border: 0;
  border-top: 1px solid #c8c9ca;
}
</style>
